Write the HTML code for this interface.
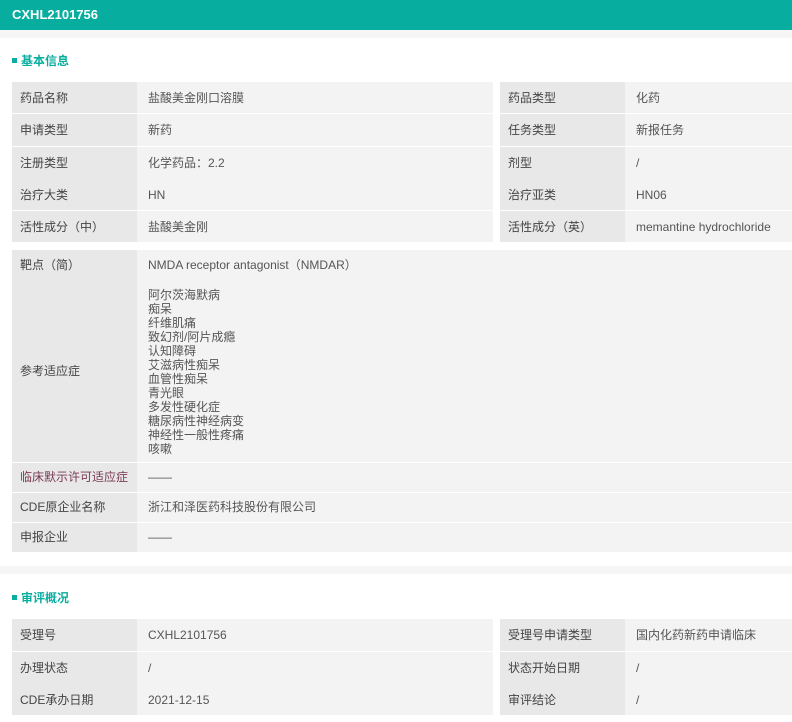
<!DOCTYPE html>
<html><head><meta charset="utf-8"><style>
*{margin:0;padding:0;box-sizing:border-box}
body{width:792px;height:722px;background:#fff;font-family:"Liberation Sans","Noto Sans CJK SC",sans-serif;font-size:12px;color:#555;position:relative;overflow:hidden}
.a{position:absolute}
.hd{left:0;top:0;width:792px;height:30px;background:#07ad9e;color:#fff;font-weight:bold;font-size:13px;line-height:30px;padding-left:12px}
.gs{left:0;width:792px;height:8px;background:#f6f6f6}
.tt{left:12px;color:#07ad9e;font-weight:bold;font-size:12px;line-height:14px}
.tt:before{content:"";display:inline-block;width:5px;height:5px;background:#07ad9e;margin-right:4px;vertical-align:2px}
.l{background:#e8e8e8;padding-left:8px;color:#444}
.v{background:#f3f3f3;padding-left:11px}
.c{line-height:32px}
</style></head><body>
<div class="a hd">CXHL2101756</div>
<div class="a gs" style="top:30px"></div>
<div class="a tt" style="top:54px">基本信息</div>

<div class="a l c" style="left:12px;top:82px;width:125px;height:31px">药品名称</div>
<div class="a v c" style="left:137px;top:82px;width:356px;height:31px">盐酸美金刚口溶膜</div>
<div class="a l c" style="left:12px;top:114px;width:125px;height:32px">申请类型</div>
<div class="a v c" style="left:137px;top:114px;width:356px;height:32px">新药</div>
<div class="a l" style="left:12px;top:147px;width:125px;height:63px"><div class="c">注册类型</div><div class="c">治疗大类</div></div>
<div class="a v" style="left:137px;top:147px;width:356px;height:63px"><div class="c">化学药品：2.2</div><div class="c">HN</div></div>
<div class="a l c" style="left:12px;top:211px;width:125px;height:31px">活性成分（中）</div>
<div class="a v c" style="left:137px;top:211px;width:356px;height:31px">盐酸美金刚</div>
<div class="a l c" style="left:500px;top:82px;width:125px;height:31px">药品类型</div>
<div class="a v c" style="left:625px;top:82px;width:167px;height:31px">化药</div>
<div class="a l c" style="left:500px;top:114px;width:125px;height:32px">任务类型</div>
<div class="a v c" style="left:625px;top:114px;width:167px;height:32px">新报任务</div>
<div class="a l" style="left:500px;top:147px;width:125px;height:63px"><div class="c">剂型</div><div class="c">治疗亚类</div></div>
<div class="a v" style="left:625px;top:147px;width:167px;height:63px"><div class="c">/</div><div class="c">HN06</div></div>
<div class="a l c" style="left:500px;top:211px;width:125px;height:31px">活性成分（英）</div>
<div class="a v c" style="left:625px;top:211px;width:167px;height:31px">memantine hydrochloride</div>

<div class="a l" style="left:12px;top:250px;width:125px;height:212px"></div>
<div class="a v" style="left:137px;top:250px;width:655px;height:212px"></div>
<div class="a" style="left:20px;top:258px;line-height:14px;color:#444">靶点（简）</div>
<div class="a" style="left:148px;top:258px;line-height:14px">NMDA receptor antagonist（NMDAR）</div>
<div class="a" style="left:20px;top:364px;line-height:14px;color:#444">参考适应症</div>
<div class="a" style="left:148px;top:288px;line-height:14px">阿尔茨海默病<br>痴呆<br>纤维肌痛<br>致幻剂/阿片成瘾<br>认知障碍<br>艾滋病性痴呆<br>血管性痴呆<br>青光眼<br>多发性硬化症<br>糖尿病性神经病变<br>神经性一般性疼痛<br>咳嗽</div>
<div class="a l" style="left:12px;top:463px;width:125px;height:29px;line-height:29px;color:#7a3a55">临床默示许可适应症</div>
<div class="a v" style="left:137px;top:463px;width:655px;height:29px;line-height:29px">——</div>
<div class="a l" style="left:12px;top:493px;width:125px;height:29px;line-height:29px">CDE原企业名称</div>
<div class="a v" style="left:137px;top:493px;width:655px;height:29px;line-height:29px">浙江和泽医药科技股份有限公司</div>
<div class="a l" style="left:12px;top:523px;width:125px;height:29px;line-height:29px">申报企业</div>
<div class="a v" style="left:137px;top:523px;width:655px;height:29px;line-height:29px">——</div>

<div class="a gs" style="top:566px"></div>
<div class="a tt" style="top:591px">审评概况</div>

<div class="a l c" style="left:12px;top:619px;width:125px;height:32px">受理号</div>
<div class="a v c" style="left:137px;top:619px;width:356px;height:32px">CXHL2101756</div>
<div class="a l" style="left:12px;top:652px;width:125px;height:63px"><div class="c">办理状态</div><div class="c">CDE承办日期</div></div>
<div class="a v" style="left:137px;top:652px;width:356px;height:63px"><div class="c">/</div><div class="c">2021-12-15</div></div>
<div class="a l c" style="left:500px;top:619px;width:125px;height:32px">受理号申请类型</div>
<div class="a v c" style="left:625px;top:619px;width:167px;height:32px">国内化药新药申请临床</div>
<div class="a l" style="left:500px;top:652px;width:125px;height:63px"><div class="c">状态开始日期</div><div class="c">审评结论</div></div>
<div class="a v" style="left:625px;top:652px;width:167px;height:63px"><div class="c">/</div><div class="c">/</div></div>
</body></html>
